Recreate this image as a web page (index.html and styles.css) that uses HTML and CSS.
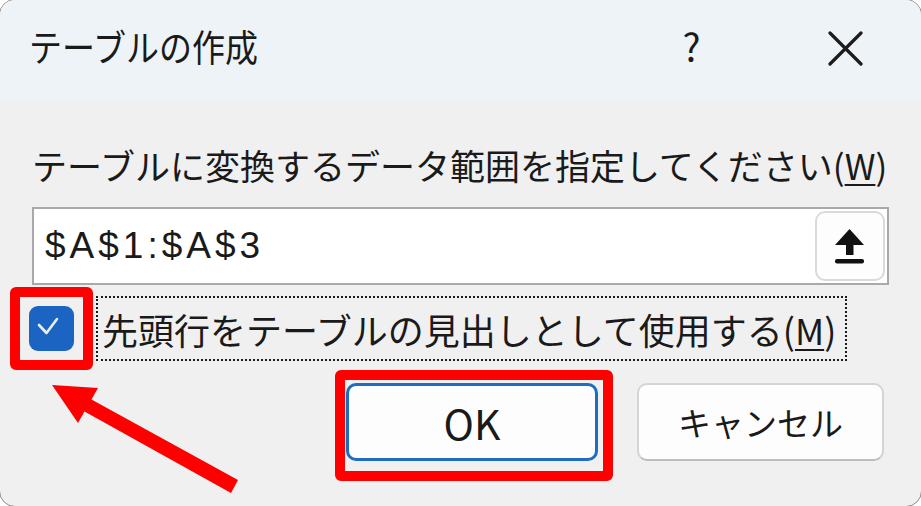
FILE: index.html
```html
<!DOCTYPE html>
<html>
  <head>
    <title>テーブルの作成</title>
    <meta charset="UTF-8" />
    <link rel="stylesheet" href="styles.css">
  </head>
  <body>
    <div class="dialog">
      <div class="titlebar">
        <span class="title">テーブルの作成</span>
        <span class="help">?</span>
        <span class="close">
          <svg width="35" height="35" viewBox="0 0 35 35">
            <path d="M2 2 L33 33 M33 2 L2 33" stroke="#1c1c1c" stroke-width="3.2" stroke-linecap="round" fill="none" />
          </svg>
        </span>
      </div>

      <div class="content">
        <div class="prompt">テーブルに変換するデータ範囲を指定してください(<u>W</u>)</div>

        <div class="range">
          <span class="range-value">$A$1:$A$3</span>
          <span class="collapse">
            <svg width="30" height="36" viewBox="0 0 30 36">
              <polygon points="14.5,0 29,16 0,16" fill="#111" />
              <rect x="11" y="14" width="7.5" height="12" fill="#111" />
              <rect x="0" y="30" width="29" height="4.5" rx="2" fill="#111" />
            </svg>
          </span>
        </div>

        <div class="header-row">
          <span class="mark">
            <span class="checkbox">
              <svg width="45" height="45" viewBox="0 0 45 45">
                <path d="M10 19 L17.5 27 L28 13" stroke="#e9eff9" stroke-width="2.6" stroke-linecap="round" stroke-linejoin="round" fill="none" />
              </svg>
            </span>
          </span>
          <span class="check-label">先頭行をテーブルの見出しとして使用する(<u>M</u>)</span>
        </div>

        <div class="buttons">
          <span class="ok-wrap">
            <button class="btn ok">OK</button>
            <span class="ok-frame"></span>
          </span>
          <button class="btn cancel">キャンセル</button>
        </div>
      </div>

      <!-- annotation arrow -->
      <svg class="arrow" width="921" height="506" viewBox="0 0 921 506">
        <polygon points="52,385 98,388 91.5,399.4 238,480 231,493 84.5,411.6 78,423" fill="#ff0000" />
      </svg>
    </div>
  </body>
</html>
```

FILE: styles.css
```css
body,
html {
  margin: 0;
  padding: 0;
  overflow: hidden;
  background-color: #ffffff;
}

.dialog {
  position: relative;
  width: 923px;
  height: 508px;
  margin: -1px;
  box-sizing: border-box;
  border: 1px solid #8c8c8c;
  border-radius: 16px;
  background-color: #f0f0f0;
  overflow: hidden;
  font-family: "Noto Sans CJK JP", "Noto Sans", sans-serif;
  color: #1a1a1a;
}

.titlebar {
  height: 100px;
  display: flex;
  align-items: center;
  padding-left: 29px;
  padding-bottom: 8px;
  box-sizing: border-box;
  background-color: #eef3f7;
}

.title {
  flex: 1;
  font-size: 33px;
  line-height: 1;
  transform-origin: left center;
  transform: scaleY(1.12);
}

.help {
  width: 21px;
  margin-right: 126px;
  font-size: 38px;
  line-height: 1;
  text-align: center;
}

.close {
  width: 35px;
  height: 35px;
  margin-right: 58px;
  margin-top: 4px;
}

.content {
  padding: 0 32px;
}

.prompt {
  padding-top: 40px;
  height: 50px;
  line-height: 50px;
  margin-bottom: 17px;
  font-size: 35px;
  white-space: nowrap;
}

u {
  text-decoration-thickness: 2px;
  text-underline-offset: 4px;
}

.range {
  height: 78px;
  box-sizing: border-box;
  border: 2px solid #a9a9a9;
  background-color: #ffffff;
  display: flex;
  align-items: center;
  padding: 0 2px 0 11px;
}

.range-value {
  flex: 1;
  font-family: "Liberation Sans", Arial, sans-serif;
  font-size: 37px;
  letter-spacing: 4px;
}

.collapse {
  width: 70px;
  height: 70px;
  box-sizing: border-box;
  border: 2px solid #dadada;
  border-radius: 10px;
  background-color: #fdfdfd;
  display: flex;
  justify-content: center;
  align-items: center;
  padding-top: 2px;
}

.header-row {
  display: flex;
  align-items: center;
  margin-top: 2px;
  margin-left: -22px;
}

.mark {
  width: 83px;
  height: 83px;
  box-sizing: border-box;
  border: 10px solid #fe0000;
  border-radius: 6px;
  display: flex;
  justify-content: center;
  align-items: center;
}

.checkbox {
  width: 45px;
  height: 45px;
  border-radius: 9px;
  background-color: #1c64c1;
}

.check-label {
  margin-left: 3px;
  height: 65px;
  box-sizing: border-box;
  border: 2px dotted #1a1a1a;
  padding: 0 9px 0 4px;
  display: flex;
  align-items: center;
  font-size: 36px;
  white-space: nowrap;
}

.buttons {
  display: flex;
  justify-content: flex-end;
  gap: 39px;
  margin-top: 13px;
  padding-right: 5px;
}

.ok-wrap {
  position: relative;
  display: flex;
}

.btn {
  height: 78px;
  box-sizing: border-box;
  border: 2px solid #d4d4d4;
  border-bottom-color: #bdbdbd;
  border-radius: 10px;
  background-color: #fdfdfd;
  font-family: "Noto Sans CJK JP", "Noto Sans", sans-serif;
  font-size: 34px;
  color: #1a1a1a;
  padding: 0;
}

.ok {
  width: 252px;
  border: 3px solid #1f6cc3;
  font-size: 41px;
}

.cancel {
  width: 247px;
  font-size: 33px;
}

.ok-frame {
  position: absolute;
  left: -11px;
  top: -13px;
  right: -15px;
  bottom: -20px;
  border: 10px solid #fe0000;
  border-radius: 6px;
}

.arrow {
  position: absolute;
  left: 0;
  top: 0;
  pointer-events: none;
}
```
